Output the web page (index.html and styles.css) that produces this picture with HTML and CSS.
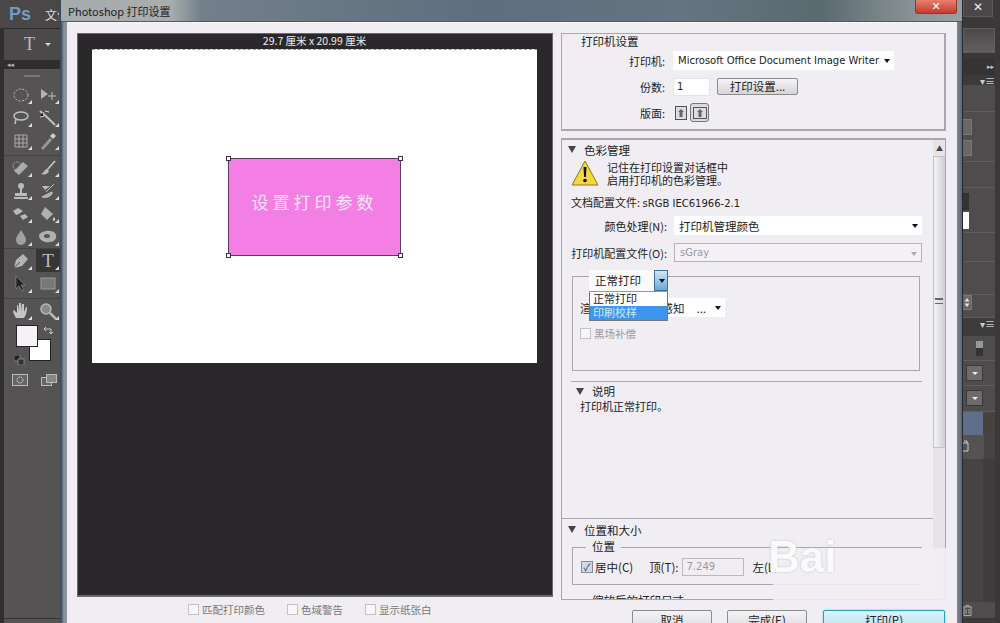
FILE: index.html
```html
<!DOCTYPE html>
<html>
<head>
<title>Photoshop 打印设置</title>
<meta name="viewport" content="width=device-width, initial-scale=1">
<link rel="stylesheet" href="styles.css">
</head>
<body>
<div class="app">

  <!-- left tools -->
  <div class="tools">
    <div class="ps-bar"><span class="ps-logo">Ps</span><span class="ps-menu">文件</span></div>
    <div class="opt-bar"><span class="opt-t">T</span><span class="opt-arrow"></span></div>
    <div class="collapse-strip">◂◂</div>
    <div class="tool-grip"></div>
    <div class="tool-group">
      <div class="tool"><svg width="18" height="16" viewBox="0 0 18 16"><ellipse cx="9" cy="8" rx="7" ry="6" fill="none" stroke="#c0c0c0" stroke-dasharray="2 1.5"/></svg></div>
      <div class="tool"><svg width="18" height="16" viewBox="0 0 18 16"><path d="M2 2l7 5-7 5z" fill="#b4b4b4"/><path d="M13 5v8M9 9h8" stroke="#c0c0c0"/></svg></div>
      <div class="tool"><svg width="18" height="16" viewBox="0 0 18 16"><ellipse cx="9" cy="6" rx="7" ry="4" fill="none" stroke="#c0c0c0" stroke-width="1.500"/><path d="M4 9l-1 5" stroke="#c0c0c0" stroke-width="1.500"/></svg></div>
      <div class="tool"><svg width="18" height="16" viewBox="0 0 18 16"><path d="M1 1l9 8 6 6" stroke="#c0c0c0" stroke-width="2"/><path d="M4 2l1 4-4 1M6 1l4 1" stroke="#ddd"/></svg></div>
      <div class="tool"><svg width="18" height="18" viewBox="0 0 18 18"><path d="M3 3h12v12H3zM3 7h12M3 11h12M7 3v12M11 3v12" fill="none" stroke="#aaa"/></svg></div>
      <div class="tool"><svg width="18" height="18" viewBox="0 0 18 18"><path d="M2 16l9-10 2 2-9 10z" fill="#999"/><path d="M11 4l3-3 3 3-3 3z" fill="#ccc"/></svg></div>
    </div>
    <div class="tool-group tool-group-b">
      <div class="tool"><svg width="18" height="16" viewBox="0 0 18 16"><path d="M2 11l9-9 5 4-9 9z" fill="#aaa"/><circle cx="5" cy="6" r="4" fill="none" stroke="#bbb" stroke-dasharray="1.500 1"/></svg></div>
      <div class="tool"><svg width="18" height="16" viewBox="0 0 18 16"><path d="M16 1L8 10" stroke="#ccc" stroke-width="1.500"/><path d="M8 9c-3 1-3 4-6 5 4 1 7 0 8-3z" fill="#bbb"/></svg></div>
      <div class="tool"><svg width="18" height="18" viewBox="0 0 18 18"><circle cx="9" cy="4" r="3" fill="#bbb"/><path d="M8 6h2v5H8zM3 11h12v3H3zM2 15h14v2H2z" fill="#bbb"/></svg></div>
      <div class="tool"><svg width="18" height="16" viewBox="0 0 18 16"><path d="M3 3h8l-5 4z" fill="#bbb"/><path d="M15 1L7 9M13 9c-3 1-6 3-10 5 4 1 8 0 10-3z" stroke="#c0c0c0" fill="#aaa"/></svg></div>
      <div class="tool"><svg width="18" height="16" viewBox="0 0 18 16"><path d="M1 5l5-3 5 3-4 3-3 1zM8 10l5-2 3 3-5 3z" fill="#b8b8b8"/></svg></div>
      <div class="tool"><svg width="18" height="18" viewBox="0 0 18 18"><path d="M6 2l8 7-6 6-6-6z" fill="#b0b0b0"/><path d="M15 12c2 2 1 4 0 4s-2-2 0-4z" fill="#ccc"/></svg></div>
      <div class="tool"><svg width="18" height="18" viewBox="0 0 18 18"><path d="M9 2c3 5 5 7 5 10a5 5 0 0 1-10 0c0-3 2-5 5-10z" fill="#a0a0a0"/></svg></div>
      <div class="tool"><svg width="20" height="16" viewBox="0 0 20 16"><path d="M1 6c2-4 12-6 16-2 3 4 0 9-5 9-5 1-11-1-11-7z" fill="#b0b0b0"/><ellipse cx="9" cy="7" rx="3" ry="2" fill="#555"/></svg></div>
    </div>
    <div class="tool-group">
      <div class="tool"><svg width="18" height="18" viewBox="0 0 18 18"><path d="M2 16l2-8 7-6 5 5-6 7z" fill="#b4b4b4"/><path d="M2 16l6-6" stroke="#555"/></svg></div>
      <div class="tool tool-active"><span class="tool-t">T</span></div>
      <div class="tool"><svg width="16" height="18" viewBox="0 0 16 18"><path d="M3 1v13l3-3 3 5 2-1-3-5h4z" fill="#222" stroke="#999" stroke-width=".6"/></svg></div>
      <div class="tool"><svg width="16" height="14" viewBox="0 0 16 14"><rect x="1" y="1" width="14" height="11" fill="#777" stroke="#999"/></svg></div>
    </div>
    <div class="tool-group tool-group-last">
      <div class="tool"><svg width="18" height="18" viewBox="0 0 18 18"><path d="M4 16C2 12 0 9 2 8l3 3V3h1l1 6V1h2v8l1-7h2v8l2-5h1c0 5-1 8-3 11z" fill="#c4c4c4"/></svg></div>
      <div class="tool"><svg width="18" height="18" viewBox="0 0 18 18"><circle cx="7" cy="7" r="5" fill="#8a8a8a" stroke="#b8b8b8" stroke-width="1.500"/><path d="M11 11l6 6" stroke="#b8b8b8" stroke-width="2.500"/></svg></div>
    </div>
    <div class="swatches">
      <div class="swatch-side">
        <svg width="11" height="10" viewBox="0 0 11 10"><rect x="0" y="0" width="6" height="6" fill="#222" stroke="#aaa" stroke-width=".6"/><rect x="4" y="4" width="6" height="6" fill="#333" stroke="#aaa" stroke-width=".6"/></svg>
      </div>
      <div class="swatch swatch-fg"></div>
      <div class="swatch swatch-bg"></div>
      <svg class="swatch-swap" width="11" height="10" viewBox="0 0 11 10"><path d="M1 3h7v5M1 3l2-2M1 3l2 2M8 8l2-2M8 8L6 6" fill="none" stroke="#ccc"/></svg>
    </div>
    <div class="mode-row">
      <svg width="16" height="12" viewBox="0 0 16 12"><rect x=".5" y=".5" width="15" height="11" fill="#666" stroke="#bbb"/><circle cx="8" cy="6" r="3" fill="none" stroke="#ddd" stroke-dasharray="1.500 1"/></svg>
      <svg width="16" height="12" viewBox="0 0 16 12"><rect x=".5" y="3.500" width="10" height="8" fill="#666" stroke="#bbb"/><rect x="5.500" y=".5" width="10" height="8" fill="#888" stroke="#bbb"/></svg>
    </div>
  </div>

  <!-- print dialog -->
  <div class="dialog">
    <div class="title-bar">
      <span class="title-text">Photoshop 打印设置</span>
      <span class="close-btn">✕</span>
    </div>
    <div class="client">

      <div class="preview-col">
        <div class="preview">
          <div class="paper-size">29.7 厘米 x 20.99 厘米</div>
          <div class="paper">
            <div class="art">
              <span class="handle h-tl"></span><span class="handle h-tr"></span>
              <span class="handle h-bl"></span><span class="handle h-br"></span>
              设置打印参数
            </div>
          </div>
        </div>
        <div class="preview-checks">
          <label class="check-off"><i class="box"></i>匹配打印颜色</label>
          <label class="check-off"><i class="box"></i>色域警告</label>
          <label class="check-off"><i class="box"></i>显示纸张白</label>
        </div>
      </div>

      <div class="settings-col">
        <div class="printer-box">
          <div class="printer-title">打印机设置</div>
          <div class="form-row">
            <span class="printer-label">打印机:</span>
            <span class="select printer-select latin">Microsoft Office Document Image Writer<i class="arrow"></i></span>
          </div>
          <div class="form-row">
            <span class="printer-label">份数:</span>
            <span class="copies latin">1</span>
            <span class="btn setup-btn">打印设置...</span>
          </div>
          <div class="form-row">
            <span class="printer-label">版面:</span>
            <span class="page-icon"><svg width="12" height="14" viewBox="0 0 12 14"><rect x=".5" y=".5" width="11" height="13" fill="#ddd" stroke="#555"/><path d="M6 3l3 3H7.500v5h-3V6H3z" fill="#666"/></svg></span>
            <span class="page-icon page-icon-on"><svg width="14" height="12" viewBox="0 0 14 12"><rect x=".5" y=".5" width="13" height="11" fill="#ddd" stroke="#555"/><path d="M7 2l3 3H8.500v5h-3V5H4z" fill="#666"/></svg></span>
          </div>
        </div>

        <div class="scroll-box">
          <div class="scroll-content">
            <div class="sec-head"><i class="tri"></i>色彩管理</div>
            <div class="warn-row">
              <svg width="28" height="28" viewBox="0 0 28 28"><path d="M14 2L27 26H1z" fill="#f5d63c" stroke="#8a7a20" stroke-linejoin="round"/><path d="M12.500 8h3l-.6 10h-1.800z" fill="#111"/><circle cx="14" cy="21.500" r="1.800" fill="#111"/></svg>
              <div class="warn-text">记住在打印设置对话框中<br>启用打印机的色彩管理。</div>
            </div>
            <div class="doc-profile">文档配置文件: <span class="latin">sRGB IEC61966-2.1</span></div>
            <div class="color-row">
              <span class="color-label">颜色处理(N):</span>
              <span class="select color-select">打印机管理颜色<i class="arrow"></i></span>
            </div>
            <div class="color-row">
              <span class="color-label">打印机配置文件(O):</span>
              <span class="select color-select select-off latin">sGray<i class="arrow arrow-off"></i></span>
            </div>

            <div class="intent-box">
              <div class="intent-body">
                <div class="intent-row">
                  <span class="intent-label">渲染方法:</span>
                  <span class="select intent-select">可感知<span class="dots">...</span><i class="arrow"></i></span>
                </div>
                <label class="check-off bpc"><i class="box"></i>黑场补偿</label>
              </div>
              <div class="combo">
                <div class="combo-head">正常打印<span class="combo-btn"><i class="arrow"></i></span></div>
                <div class="combo-list">
                  <div class="combo-item">正常打印</div>
                  <div class="combo-item combo-item-on">印刷校样</div>
                </div>
              </div>
            </div>

            <div class="sec-line"></div>
            <div class="desc-head"><i class="tri"></i>说明</div>
            <div class="desc-text">打印机正常打印。</div>

            <div class="sec-line-full"></div>
            <div class="sec-head sec-head-pos"><i class="tri"></i>位置和大小</div>
            <div class="pos-box">
              <span class="pos-legend">位置</span>
              <div class="pos-row">
                <i class="box box-on">✓</i><span class="pos-center">居中(C)</span>
                <span class="pos-top">顶(T):</span>
                <span class="pos-input latin">7.249</span>
                <span class="pos-left">左(L):</span>
              </div>
            </div>
            <div class="size-head"><span>缩放后的打印尺寸</span></div>
          </div>
          <div class="scrollbar">
            <span class="scroll-up">▲</span>
            <div class="scroll-thumb"><span class="scroll-grip"></span></div>
          </div>
        </div>

        <div class="actions">
          <span class="btn action-btn">取消</span>
          <span class="btn action-btn">完成(E)</span>
          <span class="btn action-btn action-main">打印(P)</span>
        </div>
      </div>
      <div class="wash"></div>
      <div class="watermark">Bai</div>
    </div>
  </div>

  <!-- right panels -->
  <div class="panels">
    <div class="app-close">✕</div>
    <div class="pn-box"></div>
    <div class="pn-dark"><span class="pn-arrows">▸▸</span></div>
    <div class="pn-menu pn-menu-top"><span class="pn-menuicon">▾≡</span></div>
    <div class="pn pn-27"></div>
    <div class="pn pn-buttons"><span class="pn-btn"></span><span class="pn-btn"></span></div>
    <div class="pn pn-26"></div>
    <div class="pn pn-color"><span class="pn-black"></span><span class="pn-white"></span></div>
    <div class="pn pn-29"></div>
    <div class="pn pn-33"></div>
    <div class="pn pn-spin-row">
      <span class="pn-spin"><svg width="6" height="11" viewBox="0 0 6 11"><path d="M3 1l2.500 3.500h-5zM3 10L.5 6.500h5z" fill="#e4e4e4"/></svg></span>
    </div>
    <div class="pn-menu"><span class="pn-menuicon">▾≡</span></div>
    <div class="pn pn-slider-row"><span class="pn-slider"></span></div>
    <div class="pn pn-drop-row"><span class="pn-drop"><i class="pn-caret"></i></span></div>
    <div class="pn pn-drop-row pn-drop-row2"><span class="pn-drop"><i class="pn-caret"></i></span></div>
    <div class="pn-layer"><span class="pn-layer-side"></span></div>
    <div class="pn-layer2">
      <svg width="6" height="12" viewBox="0 0 6 12"><path d="M0 3h5v8H0M1 1h3v2" fill="none" stroke="#ccc"/></svg>
    </div>
    <div class="pn-rest"></div>
    <div class="pn-foot">
      <svg width="9" height="11" viewBox="0 0 9 11"><path d="M0 2h9M3 2V.5h3V2M1 2v8.500h7V2M3 4v5M6 4v5" fill="none" stroke="#aaa"/></svg>
    </div>
  </div>
</div>
</body>
</html>
```

FILE: styles.css
```css
* { box-sizing: border-box; }
html, body { margin: 0; height: 100%; }
body { width: 1000px; height: 623px; overflow: hidden; background: #3a3839; font-family: "Noto Sans CJK SC", "DejaVu Sans", sans-serif; font-size: 11.5px; color: #222; }
.latin { font-family: "DejaVu Sans", "Noto Sans CJK SC", sans-serif; font-size: 10px; }
.app { display: flex; width: 1000px; height: 623px; }

/* tools */
.tools { width: 61px; flex: none; background: linear-gradient(#565354 618px, #333 618px, #333 619px, #565354 619px); border-left: 4px solid #312e30; border-right: 1px solid #3c4a5a; }
.ps-bar { height: 28px; background: #4a4748; display: flex; align-items: center; gap: 14px; margin-left: -4px; padding-left: 9px; }
.ps-logo { color: #6f9cc4; font: bold 18px "Liberation Sans", sans-serif; }
.ps-menu { color: #ddd; font-size: 12px; white-space: nowrap; overflow: hidden; width: 14px; }
.opt-bar { height: 32px; background: #4c494a; display: flex; align-items: center; gap: 10px; padding-left: 20px; border-top: 1px solid #2d2b2c; }
.opt-t { color: #bbb; font: 18px "Liberation Serif", serif; }
.opt-arrow { border: 3px solid transparent; border-top: 3px solid #ddd; margin-top: 3px; }
.collapse-strip { height: 9px; background: #2f2d2e; color: #bbb; font-size: 7px; line-height: 9px; padding-left: 3px; }
.tool-grip { height: 14px; margin: 0 20px; background: linear-gradient(#0000 6px, #777 6px, #777 8px, #0000 8px); }
.tool-group { display: grid; grid-template-columns: 29px 26px; grid-auto-rows: 23px; justify-items: center; align-items: center; border-bottom: 1px solid #444; padding: 0 0 3px 2px; }
.tool-group-b { padding-bottom: 0; }
.tool-group-last { border: 0; }
.tool { width: 24px; height: 23px; display: flex; align-items: center; justify-content: center; position: relative; }
.tool::after { content: ""; position: absolute; right: 1px; bottom: 2px; border: 2px solid transparent; border-right-color: #ddd; border-bottom-color: #ddd; }
.tool-active { background: #383536; }
.tool-t { color: #bbb; font: 19px "Liberation Serif", serif; }
.swatches { position: relative; height: 46px; }
.swatch { position: absolute; width: 22px; height: 22px; border: 1px solid #222; }
.swatch-fg { left: 12px; top: 0; background: #f6f1f6; z-index: 1; }
.swatch-bg { left: 25px; top: 14px; background: #fff; }
.swatch-side { position: absolute; left: 10px; top: 27px; }
.swatch-swap { position: absolute; left: 39px; top: 1px; }
.mode-row { display: flex; gap: 13px; padding: 3px 0 0 8px; }

/* dialog */
.dialog { width: 901px; flex: none; display: flex; flex-direction: column; background: linear-gradient(90deg, #3d4b5b, #8b949b 3px, #8b949b 6px, #8b949b 894px, #5b6877 901px); padding: 0 5px 0 6px; }
.title-bar { height: 22px; flex: none; margin: 0 -5px 0 -6px; padding: 0 5px 0 7px; display: flex; align-items: center; justify-content: space-between; background: linear-gradient(90deg, #a6abad, #a8adae 110px, #73808b 140px, #5f6e7d 420px, #657480 620px, #5b6a70 760px, #8d9698 860px, #97a0a2); border-bottom: 1px solid #4e5963; }
.title-text { font-size: 11px; color: #222; }
.close-btn { width: 42px; height: 14px; align-self: flex-start; background: linear-gradient(#e8806f, #c43c2c); color: #fff; border: 1px solid #8a3a30; border-top: 0; border-radius: 0 0 3px 3px; font: bold 11px/13px "DejaVu Sans", sans-serif; text-align: center; }
.client { flex: 1; min-height: 0; overflow: hidden; background: #f1eef3; display: flex; padding: 10px 10px 0 10px; position: relative; border-top: 1px solid #f8f8f8; }

.preview-col { width: 476px; flex: none; margin-right: 9px; }
.preview { height: 564px; background: #2b282c; border: 1px solid #6b696d; border-bottom-width: 2px; padding: 0 15px 0 14px; display: flex; flex-direction: column; }
.paper-size { height: 15px; color: #eee; font-size: 10.5px; line-height: 13px; text-align: center; }
.paper { height: 314px; background: #fff; border-top: 1px dashed #999; display: flex; padding: 108px 0 0 136px; }
.art { width: 173px; height: 98px; background: #f47fe4; border: 1px solid #5d3a60; color: #fbe3f7; font-size: 17px; letter-spacing: 4px; padding-bottom: 12px; display: flex; align-items: center; justify-content: center; position: relative; }
.handle { position: absolute; width: 5px; height: 5px; background: #fff; border: 1px solid #333; }
.h-tl { left: -3px; top: -3px; } .h-tr { right: -3px; top: -3px; }
.h-bl { left: -3px; bottom: -3px; } .h-br { right: -3px; bottom: -3px; }
.preview-checks { display: flex; gap: 22px; padding: 5px 0 0 111px; }
.check-off { display: flex; align-items: center; gap: 3px; color: #777; font-size: 10.5px; }
.box { display: inline-block; width: 11px; height: 11px; background: #f7f6f8; border: 1px solid #c4c2c6; flex: none; }
.box-on { width: 12px; height: 12px; background: #cfd9e8; border-color: #8a8a9a; font-style: normal; font-size: 10px; line-height: 10px; text-align: center; color: #334; }

.settings-col { width: 385px; flex: none; margin-left: -1px; display: flex; flex-direction: column; }
.printer-box { height: 98px; flex: none; border: 2px solid #a9a7ab; border-width: 1px 2px 2px 1px; padding: 0 0 0 19px; }
.printer-title { height: 17px; line-height: 15px; }
.form-row { display: flex; align-items: center; height: 19px; margin-bottom: 7px; }
.printer-label { width: 105px; padding-right: 3px; font-size: 11px; text-align: right; margin-left: -18px; flex: none; }
.select { background: #fff; display: flex; align-items: center; position: relative; padding-left: 5px; height: 19px; white-space: nowrap; }
.arrow { position: absolute; right: 4px; top: 8px; border: 3.500px solid transparent; border-top: 4px solid #111; border-bottom: 0; }
.arrow-off { border-top-color: #aaa; }
.printer-select { width: 221px; margin-left: 5px; }
.copies { width: 37px; height: 18px; background: #fff; border: 1px solid #e6e4e8; margin-left: 5px; line-height: 16px; padding-left: 3px; }
.btn { background: linear-gradient(#f4f3f5, #d6d4d8); border: 1px solid #8d8b90; border-radius: 2px; text-align: center; }
.setup-btn { width: 81px; height: 17px; line-height: 15px; margin-left: 7px; }
.page-icon { width: 19px; height: 19px; display: flex; align-items: center; justify-content: center; margin-left: 3px; }
.page-icon + .page-icon { margin-left: 0; }
.page-icon-on { border: 1px solid #777; border-radius: 3px; background: #dddbdf; }

.scroll-box { height: 462px; flex: none; margin-top: 7px; border: 1px solid #a9a7ab; border-top-width: 2px; display: flex; overflow: hidden; position: relative; }
.scroll-content { width: 371px; flex: none; padding-left: 9px; position: relative; }
.sec-head { height: 18px; padding-top: 1px; display: flex; align-items: center; gap: 8px; margin-left: -3px; }
.tri { border: 4px solid transparent; border-top: 7px solid #444; border-bottom: 0; width: 0; height: 0; }
.warn-row { display: flex; gap: 8px; height: 32px; margin-top: 1px; }
.warn-text { line-height: 13px; margin-top: 2px; white-space: nowrap; font-size: 11px; }
.doc-profile { height: 23px; line-height: 18px; margin-top: 2px; font-size: 11px; }
.color-row { display: flex; align-items: center; height: 19px; margin-bottom: 8px; margin-left: -8px; }
.color-label { width: 104px; text-align: right; flex: none; white-space: nowrap; font-size: 11px; }
.color-select { width: 248px; margin-left: 7px; }
.select-off { color: #999; border: 1px solid #b5b3b7; background: #f3f1f5; }
.intent-box { position: relative; margin: 14px 0 0 1px; width: 348px; height: 95px; border: 1px solid #a9a7ab; }
.intent-body { padding: 21px 0 0 7px; }
.intent-row { display: flex; align-items: center; height: 19px; }
.intent-label { width: 87px; flex: none; white-space: nowrap; overflow: hidden; }
.intent-select { width: 75px; padding-left: 0; margin-left: -17px; }
.dots { margin-left: 12px; }
.bpc { margin-top: 9px; color: #999; }
.combo { position: absolute; left: 16px; top: -7px; width: 79px; background: #fff; z-index: 2; }
.combo-head { height: 22px; line-height: 20px; padding-left: 6px; position: relative; border-bottom: 1px solid #999; background: #fbfbfc; }
.combo-btn { position: absolute; right: 0; top: 0; width: 14px; height: 21px; background: linear-gradient(#cfe6f8, #6aa8d8); border: 1px solid #3f6f99; }
.combo-btn .arrow { right: 2px; }
.combo-list { border: 1px solid #777; border-top: 0; }
.combo-item { height: 14px; line-height: 13px; padding-left: 3px; font-size: 11px; }
.combo-item-on { background: #3c96ee; color: #d5e8fa; }
.sec-line { height: 1px; background: #a9a7ab; width: 351px; margin-top: 10px; }
.desc-head { display: flex; align-items: center; gap: 8px; height: 18px; padding-left: 5px; }
.desc-text { padding-left: 9px; height: 17px; line-height: 13px; font-size: 11px; }
.sec-line-full { height: 1px; background: #a9a7ab; width: 372px; margin: 101px 0 0 -9px; }
.sec-head-pos { margin-top: 1px; }
.pos-box { position: relative; margin: 9px 0 0 1px; width: 350px; height: 38px; border: 1px solid #a9a7ab; border-right: 0; }
.pos-legend { position: absolute; left: 13px; top: -9px; background: #f1eef3; padding: 0 6px; line-height: 15px; }
.pos-row { display: flex; align-items: center; padding: 7px 0 0 8px; height: 30px; white-space: nowrap; }
.pos-center { margin-left: 2px; }
.pos-top { margin-left: 16px; }
.pos-input { width: 62px; height: 18px; margin-left: 4px; border: 1px solid #bbb9bd; color: #999; line-height: 16px; padding-left: 3px; }
.pos-left { margin-left: 8px; }
.size-head { margin: 15px 0 0 1px; border-top: 1px solid #a9a7ab; height: 12px; }
.size-head span { display: block; margin: -8px 0 0 13px; width: max-content; background: #f1eef3; padding: 0 7px; line-height: 14px; }
.scrollbar { width: 13px; flex: none; background: #e6e4e8; position: relative; text-align: center; }
.scroll-up { display: block; font-size: 7px; height: 16px; line-height: 16px; color: #444; }
.scroll-thumb { height: 292px; background: linear-gradient(90deg, #f4f3f5, #d0ced2); border: 1px solid #c2c0c4; position: relative; }
.scroll-grip { position: absolute; left: 1px; top: 141px; width: 8px; height: 6px; border-top: 2px double #666; border-bottom: 1px solid #666; }
.actions { display: flex; flex: none; justify-content: flex-end; gap: 15px; margin-top: 10px; padding-right: 1px; }
.action-btn { width: 80px; height: 24px; line-height: 18px; }
.action-main { width: 122px; margin-left: 1px; border: 1px solid #2f9db8; background: linear-gradient(#d9f3fa, #b9dde9); box-shadow: 0 0 2px #5cc; }
.wash { position: absolute; left: 706px; top: 525px; width: 180px; height: 52px; background: rgba(241, 238, 243, .9); z-index: 3; }
.watermark { position: absolute; left: 701px; top: 509px; font: bold 44px "Liberation Sans", sans-serif; color: #fafafa; z-index: 4; text-shadow: 0 0 2px #bdbbc0; }

/* right panels */
.panels { flex: 1; background: #3a3839; border-left: 1px solid #2a2829; border-right: 5px solid #3a3839; display: flex; flex-direction: column; }
.app-close { height: 17px; flex: none; margin-bottom: 11px; margin-right: 2px; background: #4b4849; border: 1px solid #5c595a; border-top: 0; color: #eee; text-align: center; font: bold 12px/15px "DejaVu Sans", sans-serif; }
.pn-box { height: 25px; flex: none; margin-bottom: 5px; background: linear-gradient(#4c494a, #635f60); border: 1px solid #5f5c5d; }
.pn-dark { height: 17px; flex: none; background: #363334; position: relative; }
.pn-arrows { position: absolute; right: 1px; top: 3px; color: #ccc; font-size: 7px; }
.pn-menu { height: 18px; flex: none; background: #3d3a3b; position: relative; }
.pn-menu-top { height: 10px; }
.pn-menuicon { position: absolute; right: 0; top: 0; color: #ccc; font-size: 10px; line-height: 11px; }
.pn { flex: none; background: #4f4c4d; border-bottom: 1px solid #5f5c5d; position: relative; }
.pn-27 { height: 27px; }
.pn-buttons { height: 50px; padding-top: 7px; display: flex; flex-direction: column; gap: 5px; }
.pn-btn { width: 9px; height: 16px; background: #6a6768; border: 1px solid #777; border-left: 0; }
.pn-26 { height: 26px; }
.pn-color { height: 45px; padding-top: 5px; }
.pn-black { display: block; width: 6px; height: 17px; background: #333; margin-bottom: 2px; }
.pn-white { display: block; width: 6px; height: 17px; background: #fff; }
.pn-29 { height: 29px; }
.pn-33 { height: 33px; }
.pn-spin-row { height: 23px; }
.pn-spin { display: block; width: 9px; height: 15px; background: #6a6768; border: 1px solid #777; border-left: 0; padding: 1px 0 0 1px; line-height: 0; }
.pn-slider-row { height: 25px; }
.pn-slider { position: absolute; left: 13px; top: 5px; width: 7px; height: 15px; background: linear-gradient(#999 50%, #333 50%); }
.pn-drop-row { height: 25px; padding: 4px 0 0 3px; }
.pn-drop-row2 { height: 26px; }
.pn-drop { display: flex; align-items: center; justify-content: center; width: 17px; height: 16px; background: #6e6b6c; border: 1px solid #3a3839; }
.pn-caret { border: 3px solid transparent; border-top: 3px solid #eee; border-bottom: 0; }
.pn-layer { height: 23px; flex: none; background: #5f6f8a; position: relative; }
.pn-layer-side { position: absolute; right: 0; top: 0; width: 12px; height: 23px; background: #46433f; }
.pn-layer2 { height: 24px; flex: none; background: linear-gradient(90deg, #555253 21px, #464344 21px); padding-top: 5px; line-height: 0; }
.pn-rest { height: 143px; flex: none; background: linear-gradient(90deg, #464344 20px, #3f3c3d 20px); }
.pn-foot { height: 16px; flex: none; background: #4f4c4d; padding: 3px 0 0 0; line-height: 0; }
```
